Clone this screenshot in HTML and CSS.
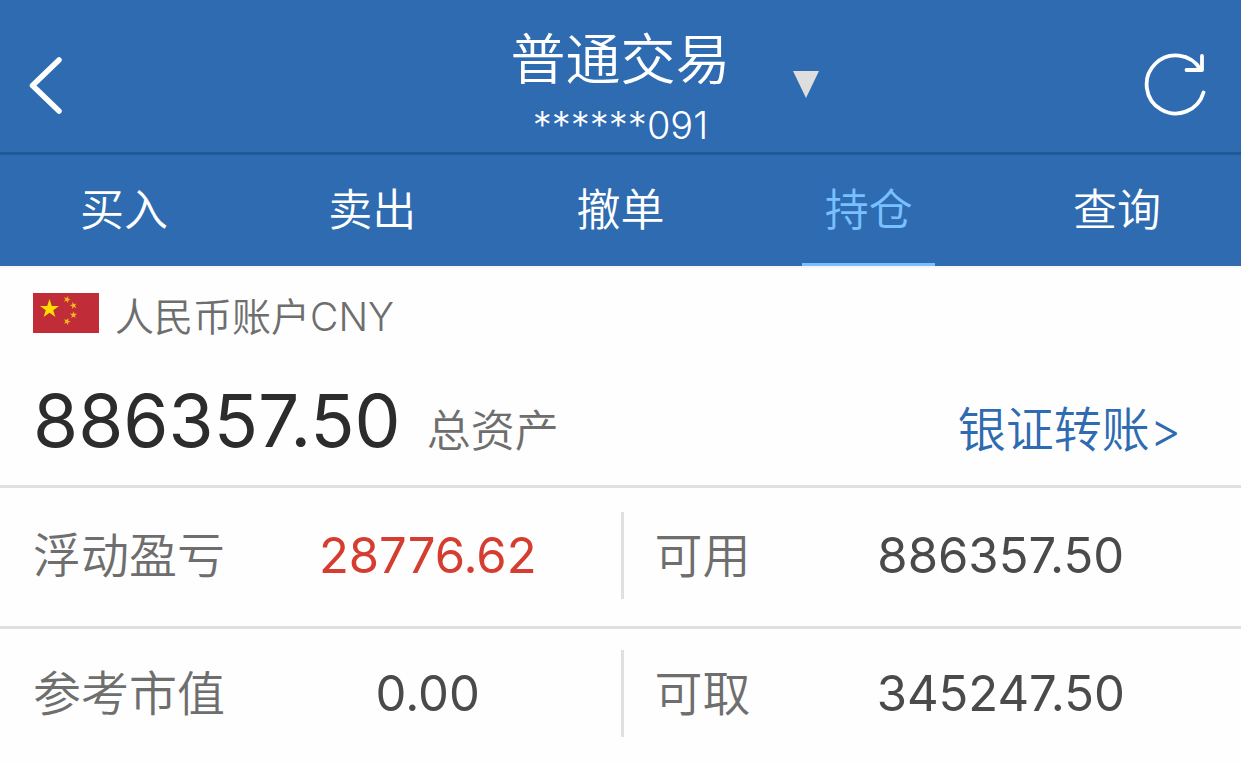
FILE: index.html
```html
<!DOCTYPE html>
<html lang="zh-CN">
<head>
<meta charset="utf-8">
<meta name="viewport" content="width=device-width, initial-scale=1">
<title>普通交易</title>
<link rel="stylesheet" href="styles.css">
</head>
<body>
<header class="header">
	<div class="header-left">
		<button type="button" class="icon-btn" aria-label="返回">
			<svg width="36" height="60" viewBox="0 0 36 60"><path d="M31 5 L4.500 30.500 L31 56" fill="none" stroke="#fff" stroke-width="5.500" stroke-linecap="round" stroke-linejoin="round"/></svg>
		</button>
	</div>
	<div class="header-title">
		<h1>普通交易</h1>
		<p>******091</p>
	</div>
	<div class="header-right">
		<button type="button" class="icon-btn" aria-label="切换账户">
			<svg width="26" height="28" viewBox="0 0 26 28"><path d="M0 0H26L13 27Z" fill="#dedede"/></svg>
		</button>
		<button type="button" class="icon-btn" aria-label="刷新">
			<svg width="64" height="64" viewBox="0 0 64 64"><g fill="none" stroke="#fff" stroke-width="3.800" stroke-linecap="round"><path d="M60.500 39.500 A29 29 0 1 1 57.500 16.500"/><path d="M43.500 17H59V3" stroke-linejoin="round"/></g></svg>
		</button>
	</div>
</header>

<nav class="tabs">
	<a href="#buy">买入</a>
	<a href="#sell">卖出</a>
	<a href="#cancel">撤单</a>
	<a href="#position" class="active">持仓</a>
	<a href="#query">查询</a>
</nav>

<section class="account">
	<div class="account-name">
		<svg class="flag" width="66" height="40" viewBox="0 0 66 40">
			<defs><path id="star" d="M0 -10 L2.300 -3.100 L9.500 -3.100 L3.700 1.200 L5.900 8.100 L0 3.800 L-5.900 8.100 L-3.700 1.200 L-9.500 -3.100 L-2.300 -3.100Z"/></defs>
			<rect width="66" height="40" fill="#c02c38"/>
			<g fill="#ffde00"><use href="#star" transform="translate(16.500 16)"/></g>
			<g fill="#f6b81c">
				<use href="#star" transform="translate(34 6.500) rotate(20) scale(.38)"/>
				<use href="#star" transform="translate(40.500 12.500) rotate(-15) scale(.38)"/>
				<use href="#star" transform="translate(40.500 22) scale(.38)"/>
				<use href="#star" transform="translate(34 28.500) rotate(20) scale(.38)"/>
			</g>
		</svg>
		<span>人民币账户CNY</span>
	</div>
	<div class="account-total">
		<strong>886357.50</strong>
		<span>总资产</span>
		<a href="#transfer">银证转账&gt;</a>
	</div>
</section>

<dl class="figures">
	<div class="item">
		<dt>浮动盈亏</dt>
		<dd class="up">28776.62</dd>
	</div>
	<div class="item">
		<dt>可用</dt>
		<dd>886357.50</dd>
	</div>
</dl>
<dl class="figures">
	<div class="item">
		<dt>参考市值</dt>
		<dd>0.00</dd>
	</div>
	<div class="item">
		<dt>可取</dt>
		<dd>345247.50</dd>
	</div>
</dl>
</body>
</html>
```

FILE: styles.css
```css
* {
	box-sizing: border-box;
}
body, h1, p, dl, dd {
	margin: 0;
}
body {
	background: #fefefe;
	color: #6e6e6e;
	font-family: Inter, "Noto Sans CJK SC", sans-serif;
	font-weight: 350;
}
a {
	text-decoration: none;
}

/* top bar */
.header {
	display: grid;
	grid-template-columns: 1fr auto 1fr;
	height: 155px;
	border-bottom: 3px solid #215898;
	background: #2e6bb1;
	color: #fff;
}
.header-left,
.header-right {
	display: flex;
	align-items: center;
	padding: 15px 28px 0;
}
.header-right {
	justify-content: space-between;
	padding: 15px 34px 0 62px;
}
.icon-btn {
	padding: 0;
	border: 0;
	background: none;
}
.icon-btn svg {
	display: block;
}
.header-title {
	padding-top: 22px;
	text-align: center;
}
.header-title h1 {
	font-size: 55px;
	font-weight: 350;
	line-height: 74px;
}
.header-title p {
	font-size: 38px;
	line-height: 58px;
}

/* tabs */
.tabs {
	display: grid;
	grid-template-columns: repeat(5, 1fr);
	justify-items: center;
	border-bottom: 2px solid #f6f6f6;
	background: #2e6bb1;
}
.tabs a {
	width: 133px;
	height: 111px;
	border-bottom: 3px solid transparent;
	color: #fff;
	font-size: 44px;
	line-height: 110px;
	text-align: center;
}
.tabs .active {
	border-color: #78c0ff;
	color: #78c0ff;
}

/* account summary */
.account {
	padding: 20px 60px 14px 33px;
}
.account-name {
	display: flex;
	align-items: center;
	gap: 16px;
	font-size: 39px;
	line-height: 58px;
}
.flag {
	margin-bottom: 8px;
}
.account-total {
	display: flex;
	align-items: baseline;
	padding-top: 35px;
	font-size: 44px;
	line-height: 80px;
}
.account-total strong {
	margin-right: 26px;
	color: #2c2c2c;
	font-size: 73px;
	font-weight: 400;
}
.account-total a {
	margin-left: auto;
	color: #2e6bb1;
	font-size: 48px;
}

/* figures */
.figures {
	display: grid;
	grid-template-columns: 1fr 1fr;
	border-top: 3px solid #e0e0e0;
	font-size: 48px;
	line-height: 87px;
}
.item {
	display: flex;
	height: 87px;
	margin: 24px 0 27px;
	padding-left: 33px;
}
.figures + .figures .item {
	margin-top: 21px;
}
.item + .item {
	padding-left: 31px;
	border-left: 3px solid #e0e0e0;
}
.item dd {
	flex: 1;
	padding-left: 10px;
	color: #4a4a4a;
	font-size: 49px;
	font-weight: 400;
	text-align: center;
}
.item .up {
	color: #d43d30;
}
```
